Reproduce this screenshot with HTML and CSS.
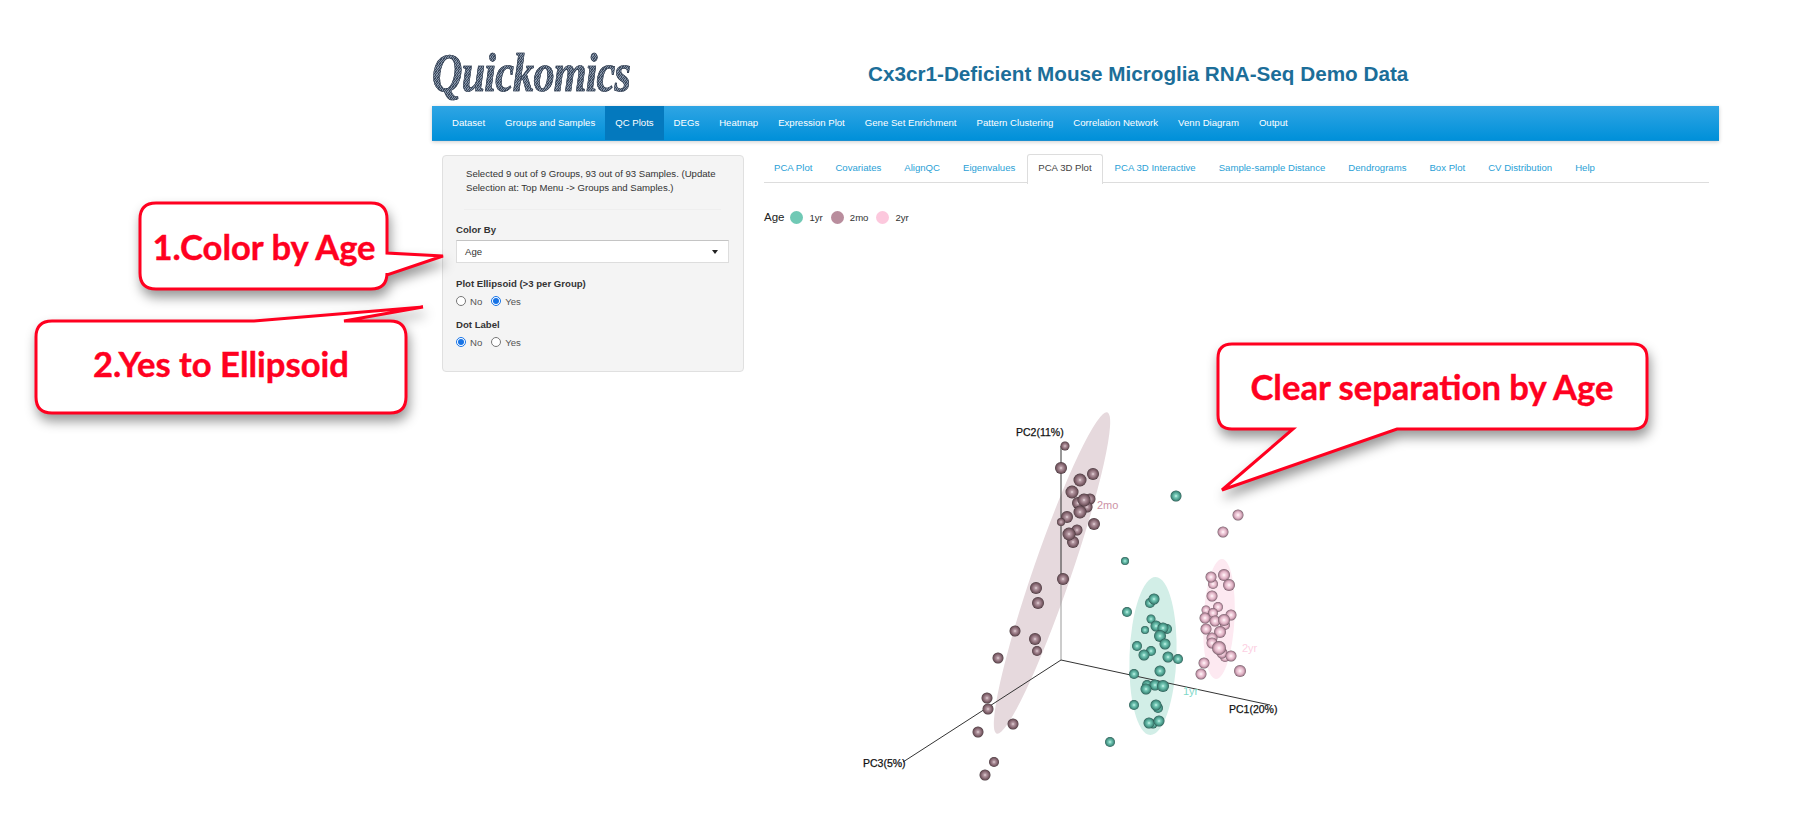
FILE: index.html
```html
<!DOCTYPE html>
<html>
<head>
    <meta charset="UTF-8">
    <title>Quickomics</title>
    <link rel="stylesheet" href="styles.css">
</head>
<body>
    <div class="page">
        <div class="header">
            <div class="logo"><span>Quickomics</span></div>
            <h1 class="title">Cx3cr1-Deficient Mouse Microglia RNA-Seq Demo Data</h1>
        </div>

        <div class="navbar">
            <a>Dataset</a>
            <a>Groups and Samples</a>
            <a class="active">QC Plots</a>
            <a>DEGs</a>
            <a>Heatmap</a>
            <a>Expression Plot</a>
            <a>Gene Set Enrichment</a>
            <a>Pattern Clustering</a>
            <a>Correlation Network</a>
            <a>Venn Diagram</a>
            <a>Output</a>
        </div>

        <div class="content">
            <div class="side-panel">
                <p class="selected">Selected 9 out of 9 Groups, 93 out of 93 Samples. (Update Selection at: Top Menu -&gt; Groups and Samples.)</p>
                <hr>
                <div class="field">
                    <label class="field-label">Color By</label>
                    <div class="select"><span>Age</span><span class="caret"></span></div>
                </div>
                <div class="field">
                    <label class="field-label">Plot Ellipsoid (&gt;3 per Group)</label>
                    <div class="radios">
                        <label><input type="radio" name="ellipsoid"> No</label>
                        <label><input type="radio" name="ellipsoid" checked> Yes</label>
                    </div>
                </div>
                <div class="field">
                    <label class="field-label">Dot Label</label>
                    <div class="radios">
                        <label><input type="radio" name="dotlabel" checked> No</label>
                        <label><input type="radio" name="dotlabel"> Yes</label>
                    </div>
                </div>
            </div>

            <div class="main">
                <div class="tabs">
                    <a>PCA Plot</a>
                    <a>Covariates</a>
                    <a>AlignQC</a>
                    <a>Eigenvalues</a>
                    <a class="active">PCA 3D Plot</a>
                    <a>PCA 3D Interactive</a>
                    <a>Sample-sample Distance</a>
                    <a>Dendrograms</a>
                    <a>Box Plot</a>
                    <a>CV Distribution</a>
                    <a>Help</a>
                </div>

                <div class="legend">
                    <span class="legend-title">Age</span>
                    <span class="dot dot-1yr"></span><span class="legend-name">1yr</span>
                    <span class="dot dot-2mo"></span><span class="legend-name">2mo</span>
                    <span class="dot dot-2yr"></span><span class="legend-name">2yr</span>
                </div>

                <!-- viewBox uses page coordinates so points are easy to read off the reference -->
                <svg class="plot" viewBox="764 400 945 423" width="945" height="423">
                    <defs>
                        <radialGradient id="ball2mo">
                            <stop offset="0" stop-color="#f7edf0"/>
                            <stop offset="0.18" stop-color="#bda2ab"/>
                            <stop offset="0.55" stop-color="#93747f"/>
                            <stop offset="0.85" stop-color="#6d525a"/>
                            <stop offset="1" stop-color="#3f3036"/>
                        </radialGradient>
                        <radialGradient id="ball1yr">
                            <stop offset="0" stop-color="#e6fff8"/>
                            <stop offset="0.2" stop-color="#86d6c4"/>
                            <stop offset="0.6" stop-color="#55a897"/>
                            <stop offset="0.85" stop-color="#3f8376"/>
                            <stop offset="1" stop-color="#23504a"/>
                        </radialGradient>
                        <radialGradient id="ball2yr">
                            <stop offset="0" stop-color="#ffffff"/>
                            <stop offset="0.22" stop-color="#f8dbe6"/>
                            <stop offset="0.6" stop-color="#e0b4c6"/>
                            <stop offset="0.85" stop-color="#ad8496"/>
                            <stop offset="1" stop-color="#6a5560"/>
                        </radialGradient>
                    </defs>

                    <ellipse cx="1052" cy="572" rx="19" ry="170" fill="#e6d9dd" transform="rotate(19 1052 572)"/>
                    <ellipse cx="1153" cy="655" rx="23.5" ry="79" fill="#d2eee7" transform="rotate(2 1153 655)"/>
                    <ellipse cx="1219" cy="618" rx="15.5" ry="60" fill="#fde9f1" transform="rotate(3 1219 618)"/>

                    <line class="axis" x1="1061" y1="445" x2="1061" y2="582"/>
                    <line class="axis-far" x1="1061" y1="582" x2="1061" y2="659"/>
                    <line class="axis" x1="1061" y1="659" x2="903" y2="761"/>
                    <line class="axis" x1="1061" y1="659" x2="1270" y2="704"/>

                    <text class="axis-label" x="1016" y="435">PC2(11%)</text>
                    <text class="axis-label" x="1229" y="712">PC1(20%)</text>
                    <text class="axis-label" x="863" y="766">PC3(5%)</text>
                    <text class="group-label label-2mo" x="1097" y="508">2mo</text>
                    <text class="group-label label-1yr" x="1183" y="694">1yr</text>
                    <text class="group-label label-2yr" x="1242" y="651">2yr</text>

                    <g fill="url(#ball2mo)">
                        <circle cx="1065" cy="445" r="4.5"/>
                        <circle cx="1061" cy="467" r="6"/>
                        <circle cx="1093" cy="473" r="6"/>
                        <circle cx="1080" cy="479" r="6.5"/>
                        <circle cx="1072" cy="491" r="6.5"/>
                        <circle cx="1090" cy="498" r="5.5"/>
                        <circle cx="1078" cy="502" r="6"/>
                        <circle cx="1087" cy="506" r="5.5"/>
                        <circle cx="1084" cy="499" r="6.5"/>
                        <circle cx="1080" cy="511" r="6.5"/>
                        <circle cx="1067" cy="516" r="6"/>
                        <circle cx="1061" cy="521" r="4"/>
                        <circle cx="1094" cy="523" r="6"/>
                        <circle cx="1077" cy="529" r="5.5"/>
                        <circle cx="1073" cy="541" r="6"/>
                        <circle cx="1069" cy="533" r="6.5"/>
                        <circle cx="1063" cy="578" r="6"/>
                        <circle cx="1036" cy="587" r="6"/>
                        <circle cx="1038" cy="602" r="6"/>
                        <circle cx="1015" cy="630" r="5.5"/>
                        <circle cx="1035" cy="638" r="6"/>
                        <circle cx="1037" cy="650" r="5"/>
                        <circle cx="998" cy="657" r="5.5"/>
                        <circle cx="987" cy="697" r="5.5"/>
                        <circle cx="988" cy="708" r="5.5"/>
                        <circle cx="1013" cy="723" r="5.5"/>
                        <circle cx="978" cy="731" r="5.5"/>
                        <circle cx="994" cy="761" r="5"/>
                        <circle cx="985" cy="774" r="5.5"/>
                    </g>

                    <g fill="url(#ball1yr)">
                        <circle cx="1176" cy="495" r="5.5"/>
                        <circle cx="1125" cy="560" r="4"/>
                        <circle cx="1127" cy="611" r="5"/>
                        <circle cx="1150" cy="602" r="5"/>
                        <circle cx="1154" cy="598" r="5.5"/>
                        <circle cx="1151" cy="618" r="4.5"/>
                        <circle cx="1145" cy="629" r="4"/>
                        <circle cx="1167" cy="628" r="5"/>
                        <circle cx="1156" cy="625" r="5.5"/>
                        <circle cx="1163" cy="627" r="5.5"/>
                        <circle cx="1160" cy="635" r="6"/>
                        <circle cx="1165" cy="643" r="5.5"/>
                        <circle cx="1137" cy="645" r="5"/>
                        <circle cx="1151" cy="650" r="5"/>
                        <circle cx="1144" cy="654" r="5.5"/>
                        <circle cx="1168" cy="656" r="5.5"/>
                        <circle cx="1178" cy="658" r="5"/>
                        <circle cx="1134" cy="673" r="5"/>
                        <circle cx="1160" cy="670" r="5.5"/>
                        <circle cx="1147" cy="684" r="5"/>
                        <circle cx="1155" cy="684" r="5.5"/>
                        <circle cx="1163" cy="685" r="6"/>
                        <circle cx="1146" cy="688" r="5.5"/>
                        <circle cx="1134" cy="704" r="5"/>
                        <circle cx="1158" cy="707" r="5"/>
                        <circle cx="1156" cy="704" r="5.5"/>
                        <circle cx="1153" cy="723" r="4.5"/>
                        <circle cx="1149" cy="722" r="5.5"/>
                        <circle cx="1159" cy="720" r="5.5"/>
                        <circle cx="1110" cy="741" r="5"/>
                    </g>

                    <g fill="url(#ball2yr)">
                        <circle cx="1238" cy="514" r="5.5"/>
                        <circle cx="1223" cy="531" r="5.5"/>
                        <circle cx="1213" cy="583" r="5"/>
                        <circle cx="1211" cy="576" r="5.5"/>
                        <circle cx="1224" cy="574" r="6"/>
                        <circle cx="1229" cy="584" r="6"/>
                        <circle cx="1212" cy="595" r="5.5"/>
                        <circle cx="1218" cy="606" r="5"/>
                        <circle cx="1206" cy="609" r="4.5"/>
                        <circle cx="1213" cy="612" r="5"/>
                        <circle cx="1231" cy="614" r="5.5"/>
                        <circle cx="1205" cy="617" r="5.5"/>
                        <circle cx="1225" cy="624" r="5"/>
                        <circle cx="1215" cy="620" r="5.5"/>
                        <circle cx="1224" cy="619" r="6"/>
                        <circle cx="1206" cy="628" r="5.5"/>
                        <circle cx="1220" cy="631" r="6"/>
                        <circle cx="1212" cy="637" r="5.5"/>
                        <circle cx="1212" cy="642" r="5.5"/>
                        <circle cx="1225" cy="656" r="5"/>
                        <circle cx="1222" cy="652" r="5.5"/>
                        <circle cx="1219" cy="647" r="7"/>
                        <circle cx="1231" cy="655" r="5.5"/>
                        <circle cx="1204" cy="662" r="5.5"/>
                        <circle cx="1201" cy="673" r="5.5"/>
                        <circle cx="1240" cy="670" r="6"/>
                    </g>
                </svg>
            </div>
        </div>
    </div>

    <!-- red annotations drawn on top of the screenshot -->
    <svg class="notes" width="1797" height="823" viewBox="0 0 1797 823">
        <path class="bubble" d="M156,203 H371 Q387,203 387,219 V253 L443,256 L387,275 V273 Q387,289 371,289 H156 Q140,289 140,273 V219 Q140,203 156,203 Z"/>
        <text class="note-text" x="264" y="260">1.Color by Age</text>

        <path class="bubble" d="M52,321 H254 L423,307 L344,321 H390 Q406,321 406,337 V397 Q406,413 390,413 H52 Q36,413 36,397 V337 Q36,321 52,321 Z"/>
        <text class="note-text" x="221" y="377">2.Yes to Ellipsoid</text>

        <path class="bubble" d="M1232,344 H1633 Q1647,344 1647,358 V415 Q1647,429 1633,429 H1397 L1222,490 L1293,429 H1232 Q1218,429 1218,415 V358 Q1218,344 1232,344 Z"/>
        <text class="note-text" x="1432" y="400">Clear separation by Age</text>
    </svg>
</body>
</html>
```

FILE: styles.css
```css
html, body {
    margin: 0;
    height: 823px;
    overflow: hidden;
    background: #fff;
}
body {
    position: relative;
    font-family: "Liberation Sans", Arial, sans-serif;
    font-size: 9.6px;
    color: #333;
}
.page {
    width: 1287px;
    margin-left: 432px;
}

/* header */
.header {
    display: flex;
    align-items: center;
    height: 106px;
}
.logo {
    width: 203px;
    padding-top: 40px;
    white-space: nowrap;
}
.logo span {
    display: inline-block;
    padding-right: 4px;
    font-family: "Liberation Serif", serif;
    font-size: 54px;
    font-style: italic;
    font-weight: bold;
    letter-spacing: -1px;
    line-height: 62px;
    background: repeating-linear-gradient(135deg, #3c4a5e 0, #3c4a5e 1px, #8492a6 1px, #8492a6 2px);
    -webkit-background-clip: text;
    background-clip: text;
    color: transparent;
    -webkit-text-stroke: 0.7px #2e3a4c;
    transform: scaleX(0.78);
    transform-origin: left center;
}
.title {
    margin: 42px 0 0 233px;
    font-size: 20.7px;
    font-weight: bold;
    color: #1c6e99;
    white-space: nowrap;
}

/* top menu */
.navbar {
    display: flex;
    height: 34px;
    padding-left: 10px;
    background: linear-gradient(#2fa5e4, #0090d9);
    border-bottom: 1px solid #1a8fd0;
    box-shadow: 0 1px 4px rgba(0, 0, 0, 0.2);
}
.navbar a {
    padding: 0 10px;
    line-height: 34px;
    color: #fff;
}
.navbar a.active {
    background: #0479be;
}

.content {
    display: flex;
    padding-top: 13px;
}

/* left panel */
.side-panel {
    box-sizing: border-box;
    width: 302px;
    height: 217px;
    margin: 1px 0 0 10px;
    padding: 11px 14px 0 13px;
    background: #f4f4f4;
    border: 1px solid #e0e0e0;
    border-radius: 4px;
}
.selected {
    margin: 0;
    padding: 0 8px 0 10px;
    line-height: 14px;
}
.side-panel hr {
    margin: 14px 8px 14px;
    border: 0;
    border-top: 1px solid #eee;
}
.field {
    margin-bottom: 12px;
}
.field-label {
    display: block;
    margin-bottom: 4px;
    font-weight: bold;
    line-height: 12px;
}
.select {
    box-sizing: border-box;
    display: flex;
    align-items: center;
    justify-content: space-between;
    height: 23px;
    margin-bottom: 15px;
    padding: 0 10px 0 8px;
    background: #fff;
    border: 1px solid #ddd;
    border-top-color: #c4c4c4;
}
.caret {
    border-left: 3.5px solid transparent;
    border-right: 3.5px solid transparent;
    border-top: 4px solid #222;
}
.radios {
    display: flex;
    gap: 9px;
    height: 12px;
    margin-top: 5px;
    color: #555;
}
.radios label {
    display: flex;
    align-items: center;
    gap: 4px;
}
.radios input {
    width: 10px;
    height: 10px;
    margin: 0;
    accent-color: #1673e6;
}

/* right side */
.main {
    width: 945px;
    margin-left: 20px;
}
.tabs {
    display: flex;
    height: 28px;
    border-bottom: 1px solid #ddd;
}
.tabs a {
    padding: 0 10px;
    margin-right: 1px;
    height: 28px;
    line-height: 26px;
    border: 1px solid transparent;
    border-bottom: 0;
    color: #2a9fd6;
}
.tabs a:first-child {
    margin-left: -1px;
}
.tabs a.active {
    height: 29px;
    color: #444;
    background: #fff;
    border-color: #ddd;
    border-radius: 3px 3px 0 0;
}
.legend {
    display: flex;
    align-items: center;
    height: 16px;
    margin-top: 26px;
}
.legend-title {
    margin-right: 6px;
    font-size: 11.5px;
    color: #222;
}
.dot {
    width: 13px;
    height: 13px;
    margin-right: 6px;
    border-radius: 50%;
}
.dot-1yr { background: #70c9b5; }
.dot-2mo { background: #b98d9d; }
.dot-2yr { background: #fcc8dd; }
.legend-name {
    margin-right: 8px;
}

/* pca plot */
.plot {
    display: block;
    margin-top: 176px;
}
.axis {
    stroke: #333;
    stroke-width: 1;
}
.axis-far {
    stroke: #999;
    stroke-width: 1;
}
.axis-label {
    font-size: 10.5px;
    fill: #111;
    stroke: #111;
    stroke-width: 0.25;
}
.group-label {
    font-size: 11px;
}
.label-2mo { fill: #cc92a6; }
.label-1yr { fill: #7fd8c8; }
.label-2yr { fill: #fcd0e2; }

/* annotations */
.notes {
    position: absolute;
    left: 0;
    top: 0;
    pointer-events: none;
}
.bubble {
    fill: #fff;
    stroke: #ff0020;
    stroke-width: 3;
    stroke-linejoin: miter;
    filter: drop-shadow(2px 7px 6px rgba(0, 0, 0, 0.4));
}
.note-text {
    font-family: Lato, "Open Sans", sans-serif;
    font-size: 34.6px;
    font-weight: bold;
    fill: #ff0020;
    stroke: #ff0020;
    stroke-width: 0.4;
    text-anchor: middle;
}
```
